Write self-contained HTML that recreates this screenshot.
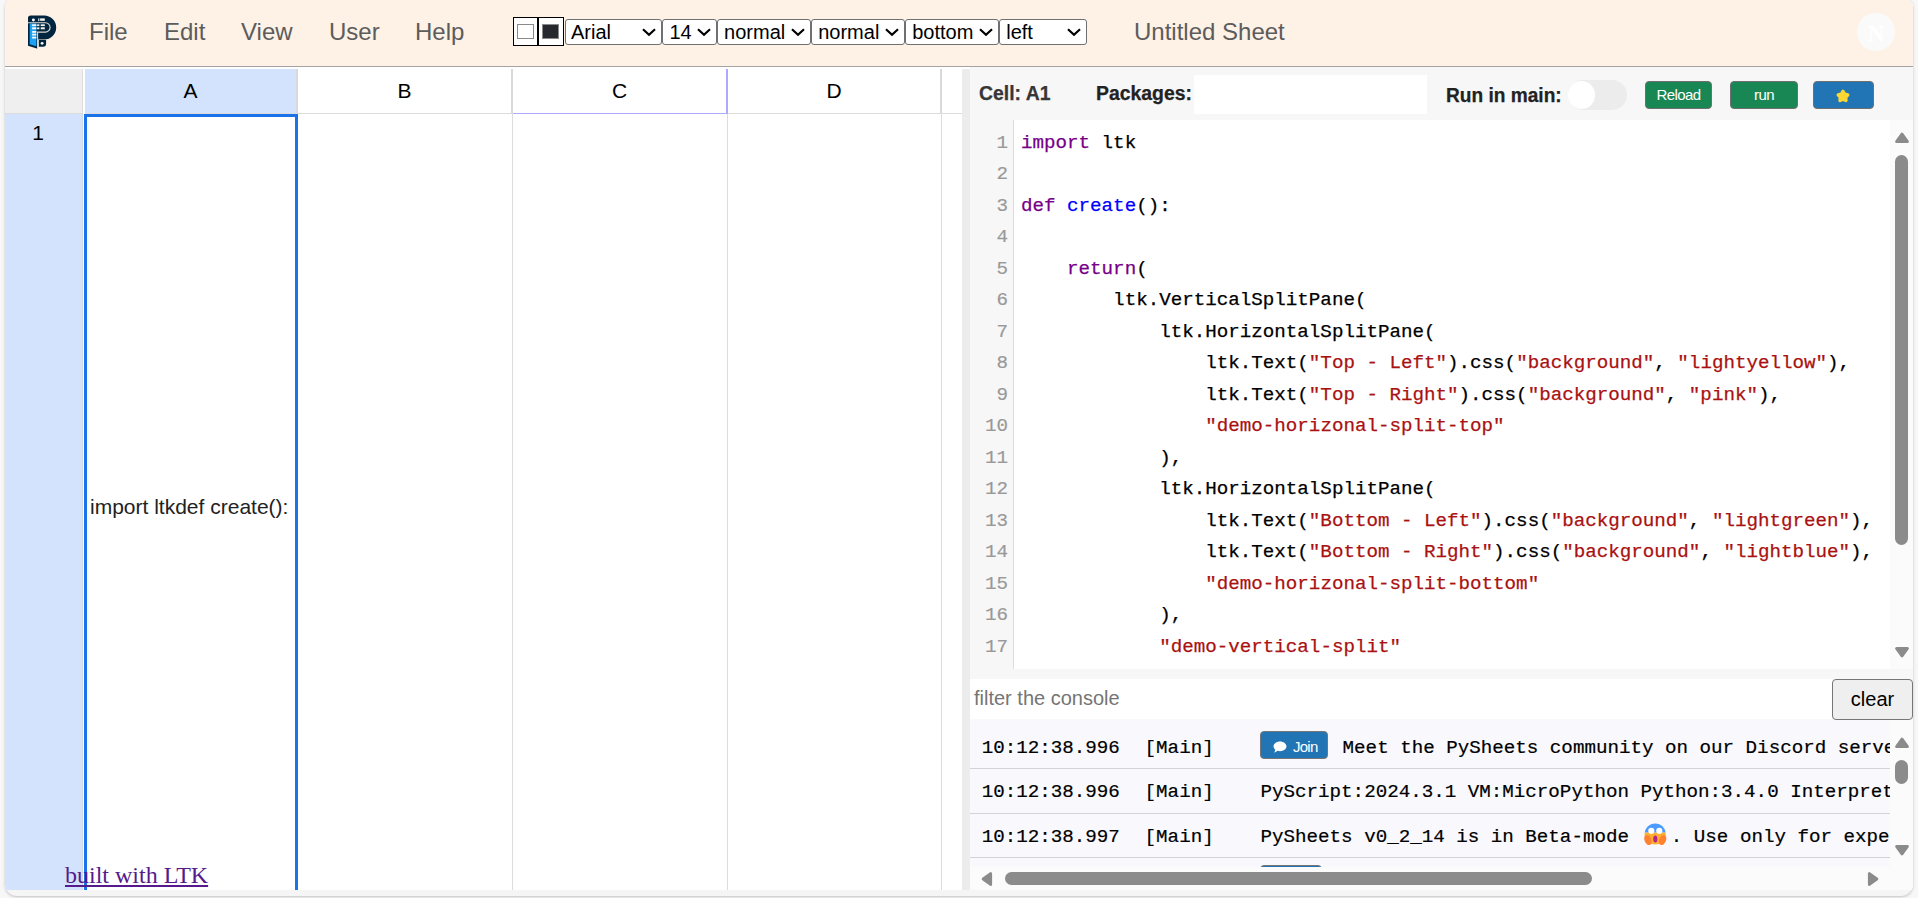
<!DOCTYPE html>
<html>
<head>
<meta charset="utf-8">
<title>PySheets</title>
<style>
*{box-sizing:border-box;margin:0;padding:0}
html,body{width:1918px;height:898px;overflow:hidden;background:#f7f7f7;font-family:"Liberation Sans",sans-serif;}
.abs{position:absolute}
#main{position:absolute;left:5px;top:-4px;width:1908px;height:900px;border-radius:12px;background:#f5f5f5;overflow:hidden;box-shadow:0 1px 3px rgba(0,0,0,.22);}
#inner{position:absolute;left:-5px;top:4px;width:1918px;height:890px;overflow:hidden;background:#fff}
/* header */
#hdr{position:absolute;left:0;top:0;width:1918px;height:66px;background:#fef1e6;}
#hdrline{position:absolute;left:0;top:66px;width:1918px;height:1px;background:#a3a3a3;}
.menu{position:absolute;top:18px;font-size:24px;line-height:28px;color:#5c5c5c;white-space:nowrap}
.colorin{position:absolute;top:16.6px;width:25px;height:29px;border:1px solid #000;background:#fff;}
.colorin i{position:absolute;left:3px;top:6px;width:17px;height:15px;border:1px solid #8a8a8a;display:block}
.sel{position:absolute;top:19px;height:25.7px;border:1px solid #707070;border-radius:3px;background:#fff;font-size:20px;line-height:25px;color:#000;padding-left:6.2px;white-space:nowrap}
.sel svg{position:absolute;right:4.8px;top:7.8px}
#title{position:absolute;left:1134px;top:18px;font-size:24px;line-height:28px;color:#5c5c5c}
#avatar{position:absolute;left:1857px;top:12.5px;width:38px;height:38px;border-radius:50%;background:#fafafa;color:#fff;font-family:"Liberation Serif",serif;font-weight:bold;font-size:23px;line-height:42px;text-align:center;-webkit-text-stroke:.4px #fff}
/* sheet */
.colh{position:absolute;top:69px;height:44px;font-size:21px;line-height:44px;text-align:center;color:#000;border-right:2px solid #d9d9d9}
.vline{position:absolute;top:114px;width:1px;height:776px;background:#dcdcdc}
/* editor */
#split{position:absolute;left:962px;top:69px;width:8px;height:821px;background:#ececec}
#right{position:absolute;left:970px;top:67px;width:943px;height:823px;background:#f7f7f7}
.lbl{position:absolute;top:81px;-webkit-text-stroke:.25px #222;font-weight:bold;font-size:20px;line-height:24px;color:#222;white-space:nowrap;transform-origin:left center}
.btn{position:absolute;top:81px;height:28px;border-radius:4px;border:1px solid #6f6f6f;color:#fff;font-size:15px;line-height:26px;text-align:center;letter-spacing:-.55px}
#code{position:absolute;left:970px;top:120px;width:943px;height:549px;background:#fff;overflow:hidden}
#gutter{position:absolute;left:0;top:0;width:44px;height:549px;background:#f7f7f7;border-right:1px solid #ddd}
.ln{-webkit-text-stroke:.2px;position:absolute;left:0;width:38px;text-align:right;color:#999;font-family:"Liberation Mono",monospace;font-size:19.2px;line-height:31.5px;height:31.5px}
.cl{-webkit-text-stroke:.25px;position:absolute;left:51px;white-space:pre;font-family:"Liberation Mono",monospace;font-size:19.2px;line-height:31.5px;height:31.5px;color:#000}
.k{color:#708}.d{color:#00f}.s{color:#a11}
.sbtrack{position:absolute;background:#fbfbfb}
.thumb{position:absolute;background:#8b8b8b;border-radius:7px}
/* console */
#filter{position:absolute;left:970px;top:679px;width:862px;height:40px;background:#fff;font-size:20px;line-height:38px;color:#757575;padding-left:4px}
#clear{z-index:5;position:absolute;left:1832px;top:679px;width:81px;height:41px;border:1px solid #767676;border-radius:4px;background:#efefef;font-size:20px;line-height:38px;text-align:center;color:#000}
#cons{position:absolute;left:970px;top:719px;width:920px;height:148px;background:#f9f9fd;overflow:hidden}
.crow{position:absolute;left:0;width:920px;border-bottom:1px solid #d3d3d5;}
.ct{-webkit-text-stroke:.2px;position:absolute;white-space:pre;font-family:"Liberation Mono",monospace;font-size:19.2px;line-height:24px;color:#000}
.join{position:absolute;height:28px;border-radius:4px;border:1px solid #767676;background:#2175b5;color:#fff;font-size:15px;line-height:29px;letter-spacing:-.75px}
</style>
</head>
<body>
<div id="main"><div id="inner">

<!-- HEADER -->
<div id="hdr"></div><div id="hdrline"></div>
<svg class="abs" id="logo" style="left:28px;top:15px" width="29" height="35" viewBox="0 0 29 35">
  <path d="M0 3 Q0 0.4 2.6 0.4 H16.2 A12 12 0 0 1 16.2 24.4 H9.6 V33.8 L0 30.8 Z" fill="#00263f"/>
  <path d="M1.7 8.6 H8.4 V31.3 L1.7 29.3 Z" fill="#1da1f2"/>
  <path d="M0 7.7 H17.4 A4.7 4.7 0 0 1 17.4 17.1 H9.6 V34" fill="none" stroke="#dcdcd8" stroke-width="1.1"/>
  <circle cx="5.4" cy="5" r="1.45" fill="#fff"/>
  <rect x="10.1" y="3.4" width="1.3" height="2.7" fill="#cfd8dd"/><rect x="12.1" y="3.4" width="4.7" height="2.4" fill="#f2f4f5"/>
  <rect x="4.1" y="9.3" width="4.3" height="1.8" fill="#f3f8fc"/><rect x="4.1" y="12.3" width="4.3" height="2" fill="#f3f8fc"/>
  <rect x="4.1" y="16" width="4.3" height="1.8" fill="#f3f8fc"/><rect x="4.1" y="18.7" width="4.3" height="1.8" fill="#f3f8fc"/><rect x="4.1" y="21.7" width="4.3" height="1.8" fill="#f3f8fc"/>
  <rect x="9.1" y="9.3" width="2.3" height="1.8" fill="#f2f4f5"/><rect x="12.7" y="9.3" width="4.1" height="1.8" fill="#f2f4f5"/>
  <rect x="9.1" y="12.3" width="2.3" height="2" fill="#f2f4f5"/><rect x="12.7" y="12.3" width="4.1" height="2" fill="#f2f4f5"/>
  <path d="M10.8 25.1 H18.1 V28.6 Q18.1 31.8 15.2 31.8 H10.8 Z" fill="#00263f"/>
  <circle cx="14.1" cy="28.3" r="1.4" fill="#fff"/>
</svg>
<div class="menu" style="left:89px">File</div>
<div class="menu" style="left:164px">Edit</div>
<div class="menu" style="left:241px">View</div>
<div class="menu" style="left:329px">User</div>
<div class="menu" style="left:415px">Help</div>

<div class="colorin" style="left:513px"><i style="background:#fff"></i></div>
<div class="colorin" style="left:538px;width:26px"><i style="background:#25282c"></i></div>
<div class="sel" style="left:565px;width:96.5px;padding-left:5px">Arial<svg width="14" height="9" viewBox="0 0 14 9"><path d="M1 1.2 L7 6.8 L13 1.2" fill="none" stroke="#000" stroke-width="2.2"/></svg></div>
<div class="sel" style="left:661.5px;width:55.3px;padding-left:7px">14<svg width="14" height="9" viewBox="0 0 14 9"><path d="M1 1.2 L7 6.8 L13 1.2" fill="none" stroke="#000" stroke-width="2.2"/></svg></div>
<div class="sel" style="left:716.9px;width:94px">normal<svg width="14" height="9" viewBox="0 0 14 9"><path d="M1 1.2 L7 6.8 L13 1.2" fill="none" stroke="#000" stroke-width="2.2"/></svg></div>
<div class="sel" style="left:811px;width:94px">normal<svg width="14" height="9" viewBox="0 0 14 9"><path d="M1 1.2 L7 6.8 L13 1.2" fill="none" stroke="#000" stroke-width="2.2"/></svg></div>
<div class="sel" style="left:905px;width:94px">bottom<svg width="14" height="9" viewBox="0 0 14 9"><path d="M1 1.2 L7 6.8 L13 1.2" fill="none" stroke="#000" stroke-width="2.2"/></svg></div>
<div class="sel" style="left:999px;width:88px">left<svg width="14" height="9" viewBox="0 0 14 9"><path d="M1 1.2 L7 6.8 L13 1.2" fill="none" stroke="#000" stroke-width="2.2"/></svg></div>

<div id="title">Untitled Sheet</div>
<div id="avatar">N</div>

<!-- SHEET -->
<div class="abs" style="left:5px;top:69px;width:78px;height:44px;background:#efefef;border-right:1px solid #dedede"></div>
<div class="colh" style="left:85px;width:213px;background:#d3e3fd">A</div>
<div class="colh" style="left:298px;width:215px">B</div>
<div class="colh" style="left:513px;width:215px;border-right:2px solid #aaaaff">C</div>
<div class="colh" style="left:728px;width:214px">D</div>
<div class="abs" style="left:85px;top:113px;width:878px;height:1px;background:#dcdcdc"></div>
<div class="abs" style="left:513px;top:113px;width:215px;height:1px;background:#aaaaff"></div>
<div class="abs" style="left:5px;top:113px;width:78px;height:777px;background:#d3e3fd;border-right:1px solid #d0d8e6;border-top:1px solid #dcdcdc"></div>
<div class="abs" style="left:27px;top:121px;width:22px;font-size:21px;line-height:24px;text-align:center;color:#000">1</div>
<div class="vline" style="left:512px"></div>
<div class="vline" style="left:727px"></div>
<div class="vline" style="left:941px"></div>
<div class="abs" style="left:84px;top:114px;width:214px;height:800px;border:3px solid #1a73e8;background:#fff"></div>
<div class="abs" style="left:90px;top:495px;font-size:21px;line-height:24px;color:#222;white-space:nowrap">import ltkdef create():</div>
<div class="abs" style="left:65px;top:861px;font-family:'Liberation Serif',serif;font-size:24px;line-height:28px;color:#551a8b;text-decoration:underline;white-space:nowrap">built with LTK</div>

<!-- RIGHT PANEL -->
<div id="split"></div>
<div id="right"></div>
<div class="lbl" style="left:979px;color:#363636;-webkit-text-stroke-color:#363636;transform:scaleX(.97)">Cell: A1</div>
<div class="lbl" style="left:1096px;transform:scaleX(.97)">Packages:</div>
<div class="abs" style="left:1194px;top:75px;width:233px;height:39px;background:#fff"></div>
<div class="lbl" style="left:1446px;top:82.5px;transform:scaleX(.955)">Run in main:</div>
<div class="abs" style="left:1567.5px;top:80px;width:59.5px;height:29.7px;border-radius:15px;background:#ececec"></div>
<div class="abs" style="left:1568px;top:81.2px;width:27.4px;height:27.4px;border-radius:15px;background:#fff"></div>
<div class="btn" style="left:1645px;width:67px;background:#198754">Reload</div>
<div class="btn" style="left:1730px;width:68px;background:#198754">run</div>
<div class="btn" style="left:1813px;width:61px;background:#2175b5"><svg class="abs" style="left:21.3px;top:6.4px" width="16" height="16" viewBox="0 0 24 24"><path d="M12.00 5.00 L14.53 9.12 L19.23 10.25 L16.09 13.93 L16.47 18.75 L12.00 16.90 L7.53 18.75 L7.91 13.93 L4.77 10.25 L9.47 9.12 Z" fill="#fdd835" stroke="#fdd835" stroke-width="5" stroke-linejoin="round"/></svg></div>

<div id="code">
<div id="gutter"></div>
<div class="ln" style="top:7.7px">1</div>
<div class="cl" style="top:7.7px"><span class="k">import</span> ltk</div>
<div class="ln" style="top:39.2px">2</div>
<div class="ln" style="top:70.7px">3</div>
<div class="cl" style="top:70.7px"><span class="k">def</span> <span class="d">create</span>():</div>
<div class="ln" style="top:102.2px">4</div>
<div class="ln" style="top:133.7px">5</div>
<div class="cl" style="top:133.7px">    <span class="k">return</span>(</div>
<div class="ln" style="top:165.2px">6</div>
<div class="cl" style="top:165.2px">        ltk.VerticalSplitPane(</div>
<div class="ln" style="top:196.7px">7</div>
<div class="cl" style="top:196.7px">            ltk.HorizontalSplitPane(</div>
<div class="ln" style="top:228.2px">8</div>
<div class="cl" style="top:228.2px">                ltk.Text(<span class="s">"Top - Left"</span>).css(<span class="s">"background"</span>, <span class="s">"lightyellow"</span>),</div>
<div class="ln" style="top:259.7px">9</div>
<div class="cl" style="top:259.7px">                ltk.Text(<span class="s">"Top - Right"</span>).css(<span class="s">"background"</span>, <span class="s">"pink"</span>),</div>
<div class="ln" style="top:291.2px">10</div>
<div class="cl" style="top:291.2px">                <span class="s">"demo-horizonal-split-top"</span></div>
<div class="ln" style="top:322.7px">11</div>
<div class="cl" style="top:322.7px">            ),</div>
<div class="ln" style="top:354.2px">12</div>
<div class="cl" style="top:354.2px">            ltk.HorizontalSplitPane(</div>
<div class="ln" style="top:385.7px">13</div>
<div class="cl" style="top:385.7px">                ltk.Text(<span class="s">"Bottom - Left"</span>).css(<span class="s">"background"</span>, <span class="s">"lightgreen"</span>),</div>
<div class="ln" style="top:417.2px">14</div>
<div class="cl" style="top:417.2px">                ltk.Text(<span class="s">"Bottom - Right"</span>).css(<span class="s">"background"</span>, <span class="s">"lightblue"</span>),</div>
<div class="ln" style="top:448.7px">15</div>
<div class="cl" style="top:448.7px">                <span class="s">"demo-horizonal-split-bottom"</span></div>
<div class="ln" style="top:480.2px">16</div>
<div class="cl" style="top:480.2px">            ),</div>
<div class="ln" style="top:511.7px">17</div>
<div class="cl" style="top:511.7px">            <span class="s">"demo-vertical-split"</span></div>
</div>

<div id="filter">filter the console</div>
<div id="clear">clear</div>
<div id="cons">
<div class="crow" style="top:0;height:50px"></div>
<div class="crow" style="top:50px;height:45px"></div>
<div class="crow" style="top:95px;height:44px"></div>
<div class="ct" style="left:11.7px;top:16.6px">10:12:38.996</div><div class="ct" style="left:174.6px;top:16.6px">[Main]</div>
<div class="join" style="left:290px;top:12px;width:68px"><svg class="abs" style="left:11.5px;top:8.5px" width="14" height="12" viewBox="0 0 15 13"><path d="M7.5 0.5 C11.4 0.5 14.5 2.9 14.5 5.8 C14.5 8.7 11.4 11 7.5 11 C6.6 11 5.7 10.9 4.9 10.6 C4 11.5 2.6 12.3 1 12.4 C1.8 11.5 2.3 10.5 2.4 9.4 C1.2 8.5 0.5 7.2 0.5 5.8 C0.5 2.9 3.6 0.5 7.5 0.5 Z" fill="#fff"/></svg><span class="abs" style="left:32px;top:0">Join</span></div>
<div class="ct" style="left:372.6px;top:16.6px">Meet the PySheets community on our Discord server</div>
<div class="ct" style="left:11.7px;top:60.6px">10:12:38.996</div><div class="ct" style="left:174.6px;top:60.6px">[Main]</div>
<div class="ct" style="left:290.5px;top:60.6px">PyScript:2024.3.1 VM:MicroPython Python:3.4.0 Interpreter</div>
<div class="ct" style="left:11.7px;top:105.6px">10:12:38.997</div><div class="ct" style="left:174.6px;top:105.6px">[Main]</div>
<div class="ct" style="left:290.5px;top:105.6px">PySheets v0_2_14 is in Beta-mode</div>
<svg class="abs" style="left:674.2px;top:104px" width="23" height="23" viewBox="0 0 23 23">
 <defs><clipPath id="fc"><circle cx="11.2" cy="11" r="10.6"/></clipPath></defs>
 <g clip-path="url(#fc)"><rect x="0" y="0" width="23" height="9.6" fill="#4a9bff"/><rect x="0" y="9.6" width="23" height="14" fill="#ffb02e"/></g>
 <circle cx="7.3" cy="7.8" r="3.1" fill="#fff"/><circle cx="15.3" cy="7.8" r="3.1" fill="#fff"/>
 <ellipse cx="11.3" cy="16" rx="2.1" ry="3.6" fill="#b5258c"/>
 <ellipse cx="3.9" cy="17" rx="3.4" ry="5.3" transform="rotate(-22 3.9 17)" fill="#ff8230"/>
 <ellipse cx="18.6" cy="17" rx="3.4" ry="5.3" transform="rotate(22 18.6 17)" fill="#ff8230"/>
</svg>
<div class="ct" style="left:700.8px;top:105.6px">. Use only for experiments</div>
<div class="join" style="left:290px;top:146px;width:62px"></div>
</div>
<!-- scrollbars -->
<div class="sbtrack" style="left:1890px;top:120px;width:23px;height:549px"></div>
<svg class="abs" style="left:1894px;top:132px" width="16" height="12" viewBox="0 0 16 12"><path d="M8 2.2 L13.4 9.6 H2.6 Z" fill="#8b8b8b" stroke="#8b8b8b" stroke-width="3" stroke-linejoin="round"/></svg>
<div class="thumb" style="left:1895px;top:155px;width:13px;height:390px"></div>
<svg class="abs" style="left:1894px;top:646px" width="16" height="12" viewBox="0 0 16 12"><path d="M8 9.8 L13.4 2.4 H2.6 Z" fill="#8b8b8b" stroke="#8b8b8b" stroke-width="3" stroke-linejoin="round"/></svg>
<div class="sbtrack" style="left:1890px;top:719px;width:23px;height:148px"></div>
<svg class="abs" style="left:1894px;top:737px" width="16" height="12" viewBox="0 0 16 12"><path d="M8 2.2 L13.4 9.6 H2.6 Z" fill="#8b8b8b" stroke="#8b8b8b" stroke-width="3" stroke-linejoin="round"/></svg>
<div class="thumb" style="left:1895px;top:760px;width:13px;height:24px"></div>
<svg class="abs" style="left:1894px;top:844px" width="16" height="12" viewBox="0 0 16 12"><path d="M8 9.8 L13.4 2.4 H2.6 Z" fill="#8b8b8b" stroke="#8b8b8b" stroke-width="3" stroke-linejoin="round"/></svg>
<div class="sbtrack" style="left:970px;top:867px;width:943px;height:23px"></div>
<svg class="abs" style="left:981px;top:871px" width="12" height="16" viewBox="0 0 12 16"><path d="M2.2 8 L9.6 2.6 V13.4 Z" fill="#8b8b8b" stroke="#8b8b8b" stroke-width="3" stroke-linejoin="round"/></svg>
<div class="thumb" style="left:1005px;top:872px;width:587px;height:13px"></div>
<svg class="abs" style="left:1867px;top:871px" width="12" height="16" viewBox="0 0 12 16"><path d="M9.8 8 L2.4 2.6 V13.4 Z" fill="#8b8b8b" stroke="#8b8b8b" stroke-width="3" stroke-linejoin="round"/></svg>

</div></div>
</body>
</html>
